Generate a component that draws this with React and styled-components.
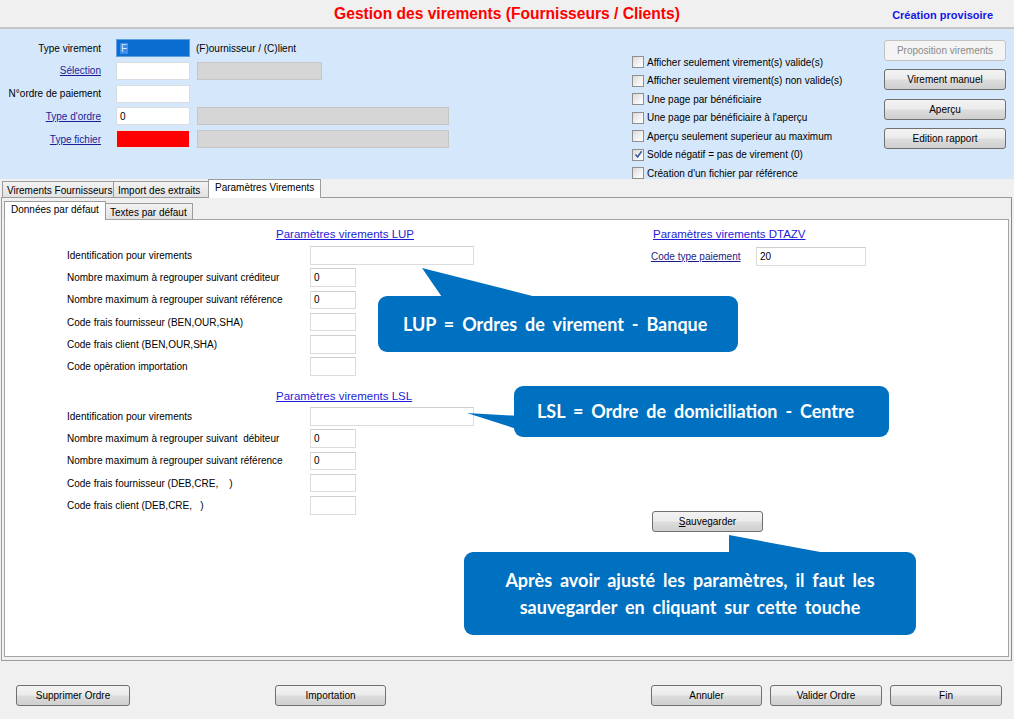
import React from 'react'
import styled, { createGlobalStyle } from 'styled-components'

const GlobalStyle = createGlobalStyle`
  html, body { margin: 0; padding: 0; }
  body {
    background: #f0f0f0;
    font-family: "Liberation Sans", Arial, sans-serif;
    font-size: 10px;
    color: #000;
  }
`

const Window = styled.div`
  position: relative;
  width: 1014px;
  height: 719px;
  overflow: hidden;
  display: flex;
  flex-direction: column;
  background: #f0f0f0;
`

const TitleBar = styled.div`
  height: 27px;
  flex-shrink: 0;
  display: grid;
  grid-template-columns: 1fr auto 1fr;
  align-items: center;
  border-bottom: 2px solid #c6c6c6;
`

const Title = styled.h1`
  grid-column: 2;
  margin: 0;
  font-size: 15.6px;
  font-weight: bold;
  color: #ff0000;
`

const Status = styled.span`
  justify-self: end;
  padding-right: 21px;
  padding-top: 3px;
  font-size: 11px;
  font-weight: bold;
  color: #1616e6;
`

const TopPanel = styled.div`
  height: 150px;
  flex-shrink: 0;
  background: #d5e8fb;
  display: grid;
  grid-template-columns: 632px 252px 122px;
`

const TopForm = styled.div`
  padding-top: 10px;
  display: flex;
  flex-direction: column;
  gap: 4.75px;
`

const FormRow = styled.div`
  display: flex;
  align-items: center;
  height: 18px;
`

const FormLabel = styled.span`
  width: 101px;
  flex-shrink: 0;
  margin-right: 15px;
  text-align: right;
  white-space: nowrap;
  color: ${p => (p.$link ? '#1c1c9a' : '#000')};
  text-decoration: ${p => (p.$link ? 'underline' : 'none')};
`

const Field = styled.div`
  box-sizing: border-box;
  width: ${p => p.$w}px;
  height: 18px;
  flex-shrink: 0;
  padding-left: 3px;
  display: flex;
  align-items: center;
  background: ${p => p.$bg || '#fff'};
  border: 1px solid ${p => p.$border || '#d8dde3'};
  margin-left: ${p => p.$ml || 0}px;
  color: ${p => p.$color || '#000'};
`

const SelectedChar = styled.span`
  background: #3d8ee8;
  color: #d7e8ff;
  padding: 0 1px;
  line-height: 11px;
`

const Hint = styled.span`
  margin-left: 6px;
  white-space: nowrap;
`

const CheckList = styled.div`
  padding-top: 23.75px;
  display: flex;
  flex-direction: column;
`

const CheckItem = styled.label`
  height: 18.5px;
  display: flex;
  align-items: center;
  white-space: nowrap;
`

const Box = styled.span`
  box-sizing: border-box;
  width: 12px;
  height: 12px;
  margin-right: 3px;
  border: 1px solid #8f8f8f;
  background: linear-gradient(135deg, #dadada, #f7f7f7 70%, #ffffff);
  display: inline-flex;
  align-items: center;
  justify-content: center;
`

const ButtonCol = styled.div`
  padding-top: 11px;
  display: flex;
  flex-direction: column;
  gap: 8.3px;
`

const Button = styled.button`
  box-sizing: border-box;
  width: ${p => p.$w || 122}px;
  height: 21px;
  padding: 0;
  flex-shrink: 0;
  border: 1px solid ${p => (p.disabled ? '#c2c2c2' : '#707070')};
  border-radius: 3px;
  background: ${p =>
    p.disabled
      ? '#f4f4f4'
      : 'linear-gradient(#f3f3f3 0%, #ebebeb 48%, #dddddd 52%, #cfcfcf 100%)'};
  font-family: "Liberation Sans", Arial, sans-serif;
  font-size: 10px;
  color: ${p => (p.disabled ? '#8a8a8a' : '#000')};
  margin-left: ${p => p.$ml || 0}px;
`

const TabStrip = styled.div`
  height: 18px;
  flex-shrink: 0;
  display: flex;
  align-items: flex-end;
  padding-left: 2px;
  position: relative;
  z-index: 1;
`

const Tab = styled.div`
  box-sizing: border-box;
  width: ${p => p.$w}px;
  height: ${p => (p.$active ? 19 : 16)}px;
  margin-bottom: ${p => (p.$active ? -1 : 0)}px;
  margin-left: ${p => (p.$first ? 0 : -1)}px;
  padding-left: ${p => (p.$active ? 6 : 4)}px;
  padding-top: ${p => (p.$active ? 2 : 1)}px;
  display: flex;
  align-items: ${p => (p.$active ? 'flex-start' : 'center')};
  white-space: nowrap;
  border: 1px solid #9c9c9c;
  border-bottom: none;
  background: ${p => (p.$active ? '#fff' : 'linear-gradient(#f2f2f2, #e2e2e2)')};
`

const OuterPanel = styled.div`
  flex: 1;
  margin: 0 2px 0 1px;
  padding: 2px 2px 3px 2px;
  border: 1px solid #9c9c9c;
  border-right-color: #8a8a8a;
  background: #f0f0f0;
  display: flex;
  flex-direction: column;
`

const SubTabStrip = styled(TabStrip)`
  height: 19px;
  padding-left: 0;
`

const InnerPanel = styled.div`
  flex: 1;
  background: #fff;
  border: 1px solid #a4a4a4;
  display: grid;
  grid-template-columns: 584px 1fr;
  align-content: start;
  padding: 7px 0 0 62px;
`

const Column = styled.div`
  display: flex;
  flex-direction: column;
`

const SectionHead = styled.span`
  align-self: flex-start;
  margin-left: ${p => p.$ml}px;
  margin-top: ${p => p.$mt || 0}px;
  line-height: 14px;
  font-size: 11.5px;
  color: #1d1dd8;
  text-decoration: underline;
  white-space: nowrap;
`

const Rows = styled.div`
  margin-top: ${p => p.$mt}px;
  display: flex;
  flex-direction: column;
  gap: 3.7px;
`

const ParamRow = styled.div`
  display: flex;
  align-items: center;
  height: 18.6px;
`

const ParamLabel = styled.span`
  width: ${p => p.$w || 243}px;
  flex-shrink: 0;
  white-space: pre;
  color: ${p => (p.$link ? '#1c1c8a' : '#000')};
  text-decoration: ${p => (p.$link ? 'underline' : 'none')};
`

const ParamInput = styled.div`
  box-sizing: border-box;
  width: ${p => p.$w}px;
  height: 18.6px;
  padding-left: 3px;
  display: flex;
  align-items: center;
  border: 1px solid #dcdcdc;
  border-top-color: #cfcfcf;
  background: #fff;
`

const SaveButton = styled(Button)`
  margin-top: 245px;
  margin-left: 1px;
`

const Footer = styled.div`
  height: 58px;
  flex-shrink: 0;
  box-sizing: border-box;
  padding: 24px 12px 0 16px;
  display: flex;
  align-items: flex-start;
`

const FooterRight = styled.div`
  margin-left: auto;
  display: flex;
  gap: 8px;
`

const Tails = styled.svg`
  position: absolute;
  left: 0;
  top: 0;
  width: 1014px;
  height: 719px;
  pointer-events: none;
`

const Callout = styled.div`
  position: absolute;
  box-sizing: border-box;
  left: ${p => p.$x}px;
  top: ${p => p.$y}px;
  width: ${p => p.$w}px;
  height: ${p => p.$h}px;
  padding-left: ${p => p.$pl || 0}px;
  border-radius: 9px;
  background: #0070c0;
  display: flex;
  flex-direction: column;
  justify-content: center;
  align-items: ${p => (p.$center ? 'center' : 'flex-start')};
  font-family: Lato, "Open Sans", sans-serif;
  font-weight: 700;
  font-size: 18px;
  line-height: 27px;
  color: #fff;
  word-spacing: 3.5px;
  white-space: nowrap;
`

const CheckMark = () => (
  <svg width="9" height="9" viewBox="0 0 9 9">
    <path d="M1.5 4.5 L3.6 7 L7.6 1.3" fill="none" stroke="#3c5a9a" strokeWidth="1.6" />
  </svg>
)

const options = [
  ['Afficher seulement virement(s) valide(s)', false],
  ['Afficher seulement virement(s) non valide(s)', false],
  ['Une page par bénéficiaire', false],
  ["Une page par bénéficiaire à l'aperçu", false],
  ['Aperçu seulement superieur au maximum', false],
  ['Solde négatif = pas de virement (0)', true],
  ["Création d'un fichier par référence", false],
]

const lupRows = [
  ['Identification pour virements', '', 164],
  ['Nombre maximum à regrouper suivant créditeur', '0', 46],
  ['Nombre maximum à regrouper suivant référence', '0', 46],
  ['Code frais fournisseur (BEN,OUR,SHA)', '', 46],
  ['Code frais client (BEN,OUR,SHA)', '', 46],
  ['Code opèration importation', '', 46],
]

const lslRows = [
  ['Identification pour virements', '', 164],
  ['Nombre maximum à regrouper suivant  débiteur', '0', 46],
  ['Nombre maximum à regrouper suivant référence', '0', 46],
  ['Code frais fournisseur (DEB,CRE,    )', '', 46],
  ['Code frais client (DEB,CRE,   )', '', 46],
]

const ParamList = ({ rows, mt }) => (
  <Rows $mt={mt}>
    {rows.map(([label, value, w]) => (
      <ParamRow key={label}>
        <ParamLabel>{label}</ParamLabel>
        <ParamInput $w={w}>{value}</ParamInput>
      </ParamRow>
    ))}
  </Rows>
)

const App = () => {
  return (
    <Window>
      <GlobalStyle />
      <TitleBar>
        <Title>Gestion des virements (Fournisseurs / Clients)</Title>
        <Status>Création provisoire</Status>
      </TitleBar>

      <TopPanel>
        <TopForm>
          <FormRow>
            <FormLabel>Type virement</FormLabel>
            <Field $w={74} $bg="#0a6ed1" $border="#5c9ee0">
              <SelectedChar>F</SelectedChar>
            </Field>
            <Hint>(F)ournisseur / (C)lient</Hint>
          </FormRow>
          <FormRow>
            <FormLabel $link>Sélection</FormLabel>
            <Field $w={74} />
            <Field $w={125} $ml={7} $bg="#d6d6d6" $border="#c6c6c6" />
          </FormRow>
          <FormRow>
            <FormLabel>N°ordre de paiement</FormLabel>
            <Field $w={74} />
          </FormRow>
          <FormRow>
            <FormLabel $link>Type d'ordre</FormLabel>
            <Field $w={74}>0</Field>
            <Field $w={252} $ml={7} $bg="#d6d6d6" $border="#c6c6c6" />
          </FormRow>
          <FormRow>
            <FormLabel $link>Type fichier</FormLabel>
            <Field $w={74} $bg="#ff0000" $border="#e4e4e4" />
            <Field $w={252} $ml={7} $bg="#d6d6d6" $border="#c6c6c6" />
          </FormRow>
        </TopForm>

        <CheckList>
          {options.map(([label, checked]) => (
            <CheckItem key={label}>
              <Box>{checked && <CheckMark />}</Box>
              {label}
            </CheckItem>
          ))}
        </CheckList>

        <ButtonCol>
          <Button disabled>Proposition virements</Button>
          <Button>Virement manuel</Button>
          <Button>Aperçu</Button>
          <Button>Edition rapport</Button>
        </ButtonCol>
      </TopPanel>

      <TabStrip>
        <Tab $w={112} $first>Virements Fournisseurs</Tab>
        <Tab $w={96}>Import des extraits</Tab>
        <Tab $w={113} $active>Paramètres Virements</Tab>
      </TabStrip>

      <OuterPanel>
        <SubTabStrip>
          <Tab $w={102} $first $active>Données par défaut</Tab>
          <Tab $w={88}>Textes par défaut</Tab>
        </SubTabStrip>

        <InnerPanel>
          <Column>
            <SectionHead $ml={209}>Paramètres virements LUP</SectionHead>
            <ParamList rows={lupRows} mt={5} />
            <SectionHead $ml={209} $mt={13}>Paramètres virements LSL</SectionHead>
            <ParamList rows={lslRows} mt={4} />
          </Column>

          <Column>
            <SectionHead $ml={2}>Paramètres virements DTAZV</SectionHead>
            <Rows $mt={6}>
              <ParamRow>
                <ParamLabel $w={105} $link>Code type paiement</ParamLabel>
                <ParamInput $w={110}>20</ParamInput>
              </ParamRow>
            </Rows>
            <SaveButton $w={111}>
              <u>S</u>auvegarder
            </SaveButton>
          </Column>
        </InnerPanel>
      </OuterPanel>

      <Footer>
        <Button $w={114}>Supprimer Ordre</Button>
        <Button $w={111} $ml={145}>Importation</Button>
        <FooterRight>
          <Button $w={111}>Annuler</Button>
          <Button $w={112}>Valider Ordre</Button>
          <Button $w={112}>Fin</Button>
        </FooterRight>
      </Footer>

      <Tails viewBox="0 0 1014 719">
        <polygon points="422,268 444,300 548,300" fill="#0070c0" />
        <polygon points="467,413 520,416 520,430" fill="#0070c0" />
        <polygon points="729,535 729,556 842,556" fill="#0070c0" />
      </Tails>

      <Callout $x={378} $y={296} $w={360} $h={56} $pl={25}>
        LUP = Ordres de virement - Banque
      </Callout>
      <Callout $x={514} $y={386} $w={375} $h={51} $pl={23}>
        LSL = Ordre de domiciliation - Centre
      </Callout>
      <Callout $x={464} $y={552} $w={452} $h={83} $center>
        <span>Après avoir ajusté les paramètres, il faut les</span>
        <span>sauvegarder en cliquant sur cette touche</span>
      </Callout>
    </Window>
  )
}

export default App
